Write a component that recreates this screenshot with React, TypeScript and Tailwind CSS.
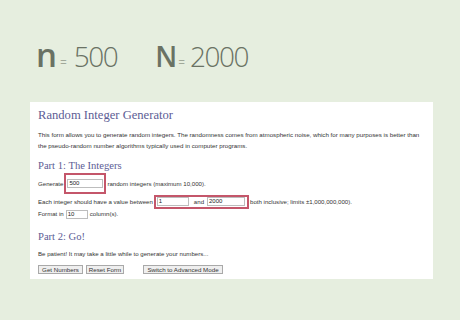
import React from "react";

const body = { fontFamily: '"Liberation Sans", Arial, sans-serif' };
const serif = { fontFamily: '"Liberation Serif", "Times New Roman", serif' };

function Field({ value, w }: { value: string; w: string }) {
  return (
    <span
      className={`flex items-center ${w} h-[9px] border border-[#bdbdbd] bg-white px-[1px] text-[6px] leading-[7px] text-[#222] whitespace-nowrap`}
    >
      {value}
    </span>
  );
}

function Btn({ children, w, ml }: { children: React.ReactNode; w: string; ml: string }) {
  return (
    <span
      className={`flex items-center justify-center ${w} ${ml} h-[9px] border border-[#a9a9a9] bg-[#efefef] text-[6.2px] leading-[7px] text-[#333] whitespace-nowrap`}
    >
      {children}
    </span>
  );
}

export default function App() {
  return (
    <div className="w-[460px] h-[320px] bg-[#e6eedf] overflow-hidden flex flex-col">
      <div
        className="h-[102px] flex items-baseline pl-[36px] pt-[40px] text-[#6a7264]"
        style={{ fontFamily: '"Open Sans", "DejaVu Sans", sans-serif' }}
      >
        <span className="text-[33px] leading-[30px] font-semibold">n</span>
        <span className="text-[12px] leading-[30px] ml-[3px] font-light">=</span>
        <span className="text-[28px] leading-[30px] font-light ml-[7px] tracking-[-1.5px]">500</span>
        <span className="text-[28px] leading-[30px] font-semibold ml-[38px]">N</span>
        <span className="text-[12px] leading-[30px] ml-[1px] font-light">=</span>
        <span className="text-[28px] leading-[30px] font-light ml-[5px] tracking-[-1.5px]">2000</span>
      </div>
      <div className="ml-[30px] w-[403px] h-[177px] bg-white pl-[8px] pt-[5px] text-[#333] flex flex-col" style={body}>
        <div className="text-[12.6px] leading-[16px] text-[#5d5d95]" style={serif}>
          Random Integer Generator
        </div>
        <div className="mt-[6px] text-[6.2px] leading-[11px] whitespace-nowrap">
          <div>
            This form allows you to generate random integers. The randomness comes from atmospheric noise, which for many purposes is better than
          </div>
          <div>the pseudo-random number algorithms typically used in computer programs.</div>
        </div>
        <div className="mt-[8px] text-[10.6px] leading-[13px] text-[#5d5d95]" style={serif}>
          Part 1: The Integers
        </div>
        <div className="mt-[1px] h-[21px] flex items-center text-[6.1px] whitespace-nowrap">
          <span>Generate</span>
          <span className="ml-[1px] border-2 border-[#c4566a] py-[4px] px-[1px] flex">
            <Field value="500" w="w-[36px]" />
          </span>
          <span className="ml-[1px]">random integers (maximum 10,000).</span>
        </div>
        <div className="h-[15px] flex items-center text-[6.1px] whitespace-nowrap">
          <span>Each integer should have a value between</span>
          <span className="ml-[1px] h-[14px] border-2 border-[#c4566a] pl-[1px] pr-[2px] flex items-center">
            <Field value="1" w="w-[32px]" />
            <span className="ml-[5px] mr-[3px]">and</span>
            <Field value="2000" w="w-[38px]" />
          </span>
          <span className="ml-[1px]">both inclusive; limits ±1,000,000,000).</span>
        </div>
        <div className="h-[10px] flex items-center text-[6.1px] whitespace-nowrap">
          <span>Format in</span>
          <span className="ml-[2px] flex">
            <Field value="10" w="w-[22px]" />
          </span>
          <span className="ml-[2px]">column(s).</span>
        </div>
        <div className="mt-[11px] text-[10.6px] leading-[13px] text-[#5d5d95]" style={serif}>
          Part 2: Go!
        </div>
        <div className="mt-[6px] text-[6.1px] leading-[9px] whitespace-nowrap">
          Be patient! It may take a little while to generate your numbers...
        </div>
        <div className="mt-[7px] flex">
          <Btn w="w-[45px]" ml="ml-0">Get Numbers</Btn>
          <Btn w="w-[38px]" ml="ml-[3px]">Reset Form</Btn>
          <Btn w="w-[80px]" ml="ml-[19px]">Switch to Advanced Mode</Btn>
        </div>
      </div>
    </div>
  );
}
